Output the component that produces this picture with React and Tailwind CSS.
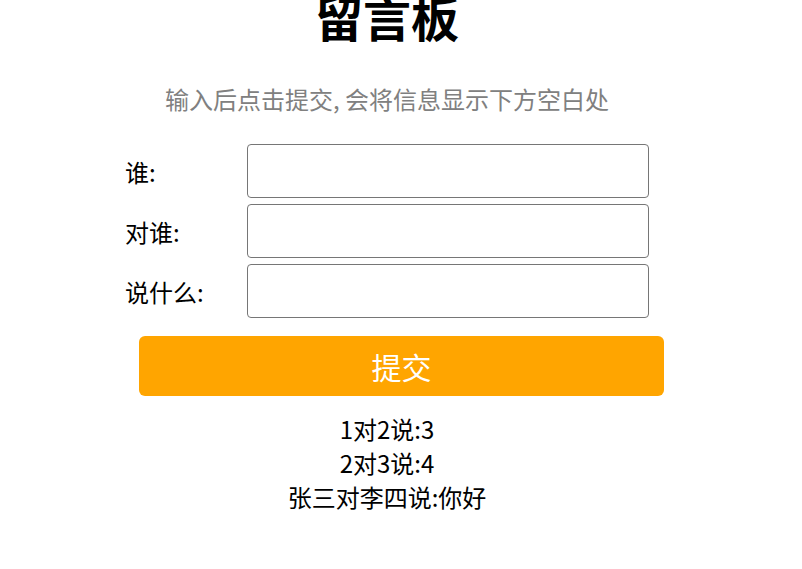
import { useState } from "react";

const fields = [
  { key: "from", label: "谁:" },
  { key: "to", label: "对谁:" },
  { key: "msg", label: "说什么:" },
];

const App = () => {
  const [form, setForm] = useState({ from: "", to: "", msg: "" });
  const [messages, setMessages] = useState([
    "1对2说:3",
    "2对3说:4",
    "张三对李四说:你好",
  ]);

  const submit = () => {
    if (!form.from || !form.to || !form.msg) return;
    setMessages([...messages, `${form.from}对${form.to}说:${form.msg}`]);
    setForm({ from: "", to: "", msg: "" });
  };

  return (
    <div className="min-h-screen bg-white text-black font-['Noto_Sans_CJK_SC','Noto_Sans',sans-serif] overflow-hidden">
      <div className="w-[774px] flex flex-col">
        {/* Title */}
        <h1 className="-mt-[8px] text-center text-[48px] leading-[48px] font-bold">留言板</h1>
        <p className="mt-[42px] text-center text-[24px] leading-[34px] text-[#808080]">
          输入后点击提交, 会将信息显示下方空白处
        </p>

        {/* Form */}
        <div className="mt-[28px] ml-[125px] flex flex-col gap-[6px]">
          {fields.map((f) => (
            <div key={f.key} className="flex items-center">
              <span className="w-[122px] text-[24px] leading-[34px] pt-[2px]">{f.label}</span>
              <input
                type="text"
                className="w-[402px] h-[54px] border border-[#767676] rounded-[4px] px-2 text-[20px] outline-none"
                value={form[f.key]}
                onChange={(e) => setForm({ ...form, [f.key]: e.target.value })}
              />
            </div>
          ))}
        </div>

        <button
          onClick={submit}
          className="mt-[18px] ml-[139px] w-[525px] h-[60px] rounded-[6px] bg-[#ffa500] text-white text-[30px] leading-[60px]"
        >
          提交
        </button>

        {/* Messages */}
        <div className="mt-[16px] flex flex-col items-center text-[24px] leading-[34px]">
          {messages.map((m, i) => (
            <div key={i}>{m}</div>
          ))}
        </div>
      </div>
    </div>
  );
};

export default App;
